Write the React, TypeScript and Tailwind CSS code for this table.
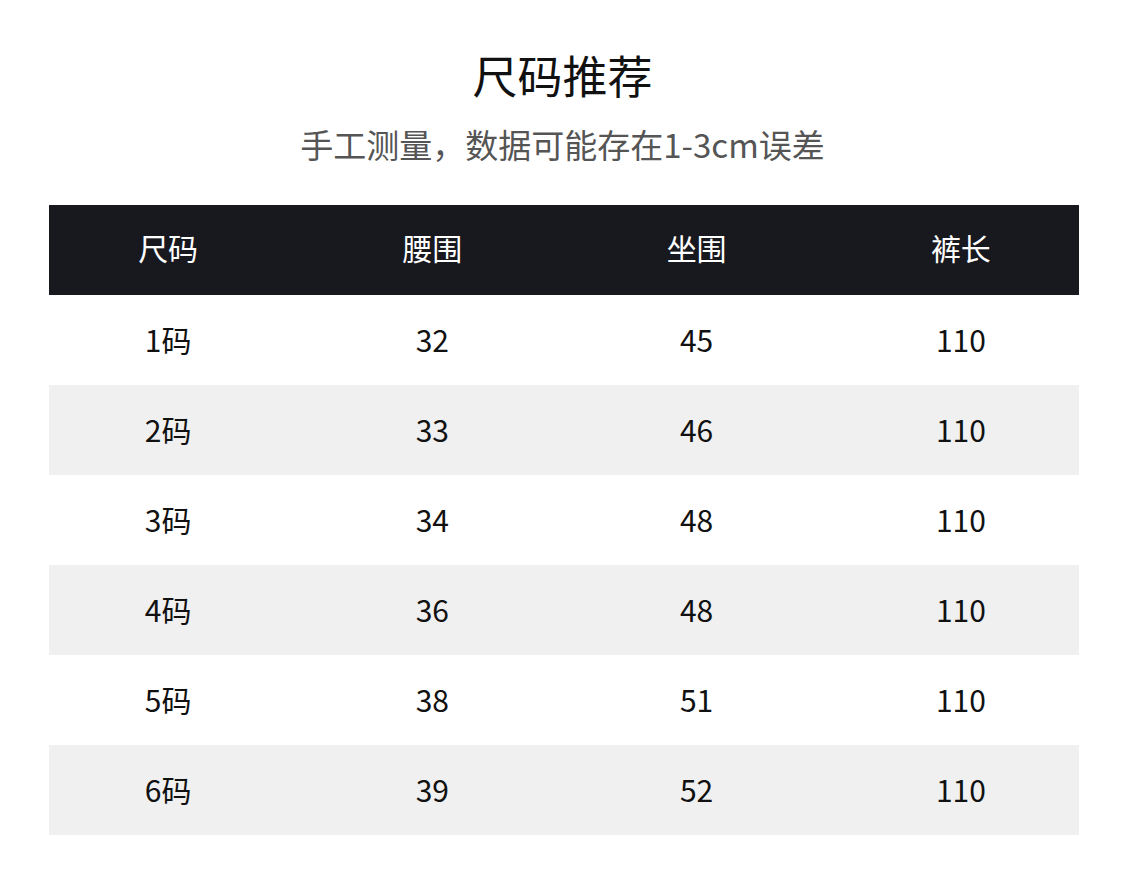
import React from 'react';

const headers = ['尺码', '腰围', '坐围', '裤长'];

const rows: string[][] = [
  ['1码', '32', '45', '110'],
  ['2码', '33', '46', '110'],
  ['3码', '34', '48', '110'],
  ['4码', '36', '48', '110'],
  ['5码', '38', '51', '110'],
  ['6码', '39', '52', '110'],
];

const font = { fontFamily: '"Noto Sans CJK SC", "Noto Sans", sans-serif' };

const Row: React.FC<{ cells: string[]; className: string; inner: string }> = ({ cells, className, inner }) => (
  <div className={`h-[90px] w-full overflow-hidden ${className}`}>
    <div className={`grid grid-cols-4 w-[1057px] -ml-[12.5px] h-full items-center ${inner}`}>
      {cells.map((c, i) => (
        <div key={i} className="text-center text-[30px] leading-[30px]">
          {c}
        </div>
      ))}
    </div>
  </div>
);

export default function App() {
  return (
    <div className="w-[1125px] h-[882px] bg-white flex flex-col items-center" style={font}>
      <h1 className="mt-[52px] text-[45px] leading-[45px] text-[#111111] font-normal">尺码推荐</h1>
      <p className="mt-[31px] text-[33px] leading-[33px] text-[#555555]">手工测量，数据可能存在1-3cm误差</p>
      <div className="mt-[44px] w-[1030px] ml-[2px]">
        <Row cells={headers} className="bg-[#18181f] text-white" inner="pb-[7px]" />
        {rows.map((r, i) => (
          <Row
            key={i}
            cells={r}
            inner="pb-[2px]"
            className={i % 2 === 1 ? 'bg-[#f0f0f0] text-[#111111]' : 'bg-white text-[#111111]'}
          />
        ))}
      </div>
    </div>
  );
}
